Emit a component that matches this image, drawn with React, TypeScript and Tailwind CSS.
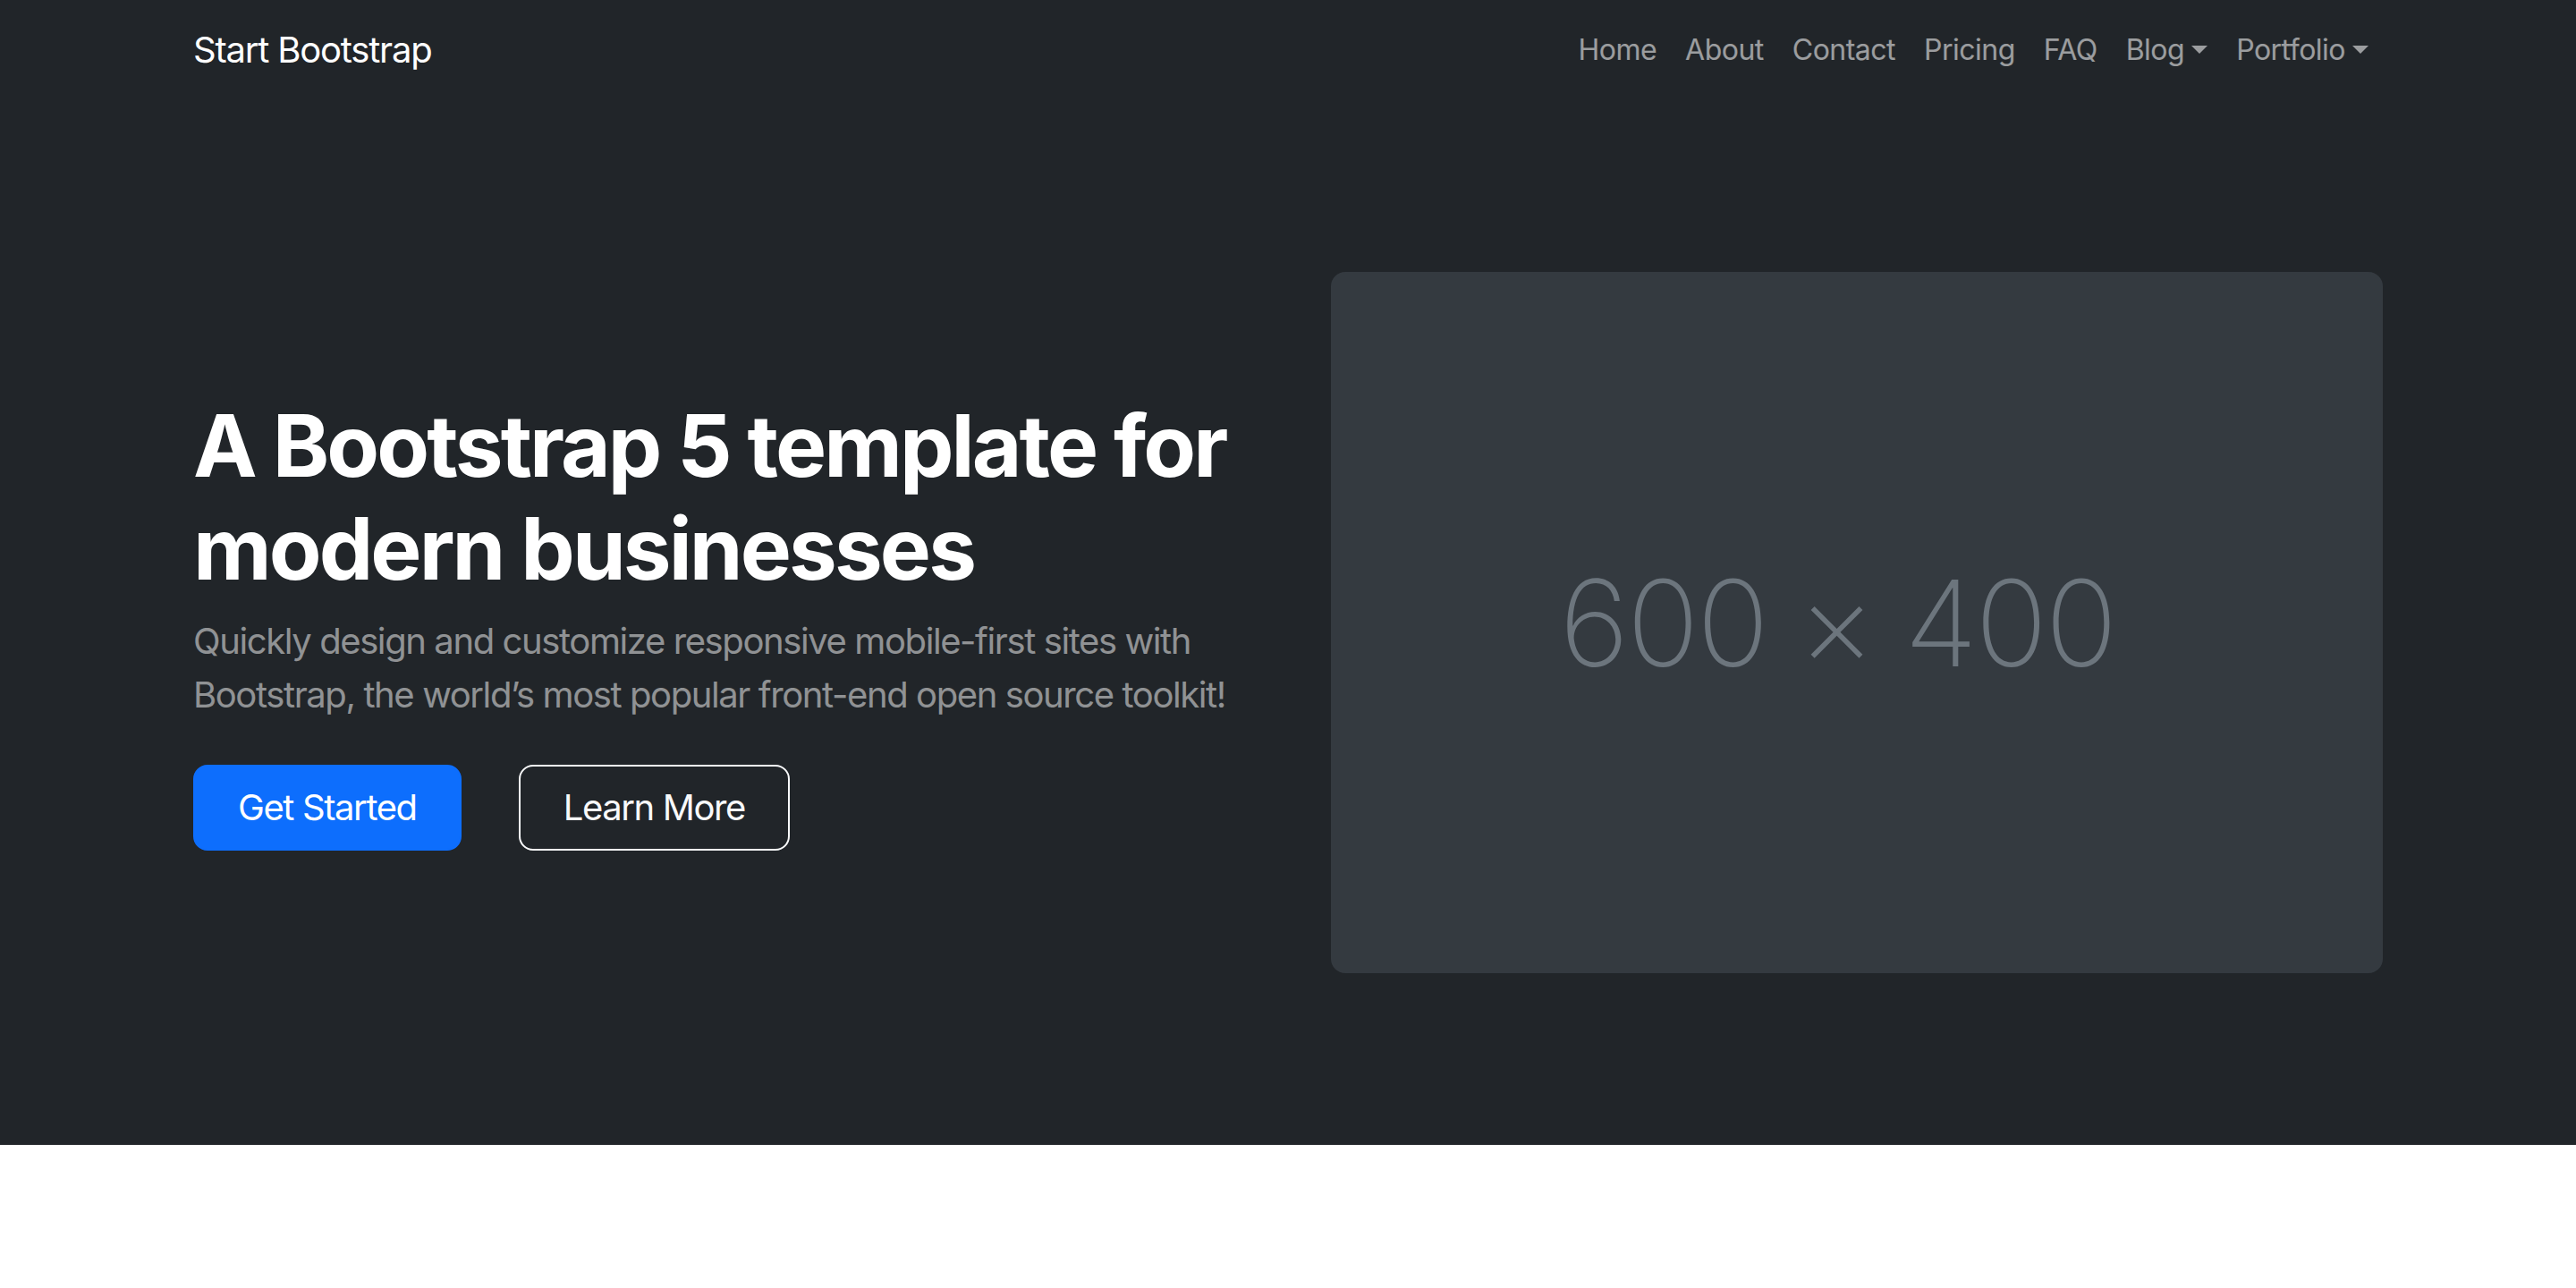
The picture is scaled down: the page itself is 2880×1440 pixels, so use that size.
const links = [
  { label: 'Home' },
  { label: 'About' },
  { label: 'Contact' },
  { label: 'Pricing' },
  { label: 'FAQ' },
  { label: 'Blog', dropdown: true },
  { label: 'Portfolio', dropdown: true },
];

export default function App() {
  return (
    <div className="min-h-screen bg-white font-['Inter','Liberation_Sans',sans-serif]">
      {/* Navbar */}
      <nav className="bg-[#212529] py-4">
        <div className="mx-auto flex w-[2640px] items-center justify-between px-24">
          <a href="#" className="py-[10px] text-[40px] leading-[1.5] tracking-[-0.03em] text-white">
            Start Bootstrap
          </a>
          <ul className="flex items-center">
            {links.map((link) => (
              <li key={link.label}>
                <a
                  href="#"
                  className="flex items-center px-4 py-4 text-[32px] leading-[1.5] tracking-[-0.016em] text-white/55"
                >
                  {link.label}
                  {link.dropdown && (
                    <span className="mb-[2px] ml-[8px] h-0 w-0 border-x-[9.6px] border-t-[9.6px] border-x-transparent border-t-white/55" />
                  )}
                </a>
              </li>
            ))}
          </ul>
        </div>
      </nav>

      {/* Hero */}
      <header className="bg-[#212529] py-24">
        <div className="mx-auto w-[2640px] px-24">
          <div className="-mx-12 flex items-center">
            <div className="w-1/2 px-12">
              <div className="my-24">
                <h1 className="mb-4 text-[96px] font-bold leading-[1.2] tracking-[-0.03em] text-white">
                  A Bootstrap 5 template for modern businesses
                </h1>
                <p className="mb-12 text-[40px] leading-[1.5] tracking-[-0.035em] text-white/50">
                  Quickly design and customize responsive mobile-first sites with Bootstrap, the world’s most popular
                  front-end open source toolkit!
                </p>
                <div className="flex gap-16">
                  <a
                    href="#features"
                    className="rounded-2xl border-2 border-[#0d6efd] bg-[#0d6efd] px-12 py-4 text-[40px] leading-[1.5] tracking-[-0.035em] text-white"
                  >
                    Get Started
                  </a>
                  <a
                    href="#!"
                    className="rounded-2xl border-2 border-[#f8f9fa] px-12 py-4 text-[40px] leading-[1.5] tracking-[-0.035em] text-[#f8f9fa]"
                  >
                    Learn More
                  </a>
                </div>
              </div>
            </div>
            <div className="w-1/2 px-12">
              {/* placeholder image 600x400 */}
              <div className="my-24 flex h-[784px] w-full items-center justify-center rounded-2xl bg-[#343a40] pr-11">
                <span className="text-[134px] font-extralight leading-none tracking-[-0.02em] text-[#6c757d]">
                  600 × 400
                </span>
              </div>
            </div>
          </div>
        </div>
      </header>
    </div>
  );
}
